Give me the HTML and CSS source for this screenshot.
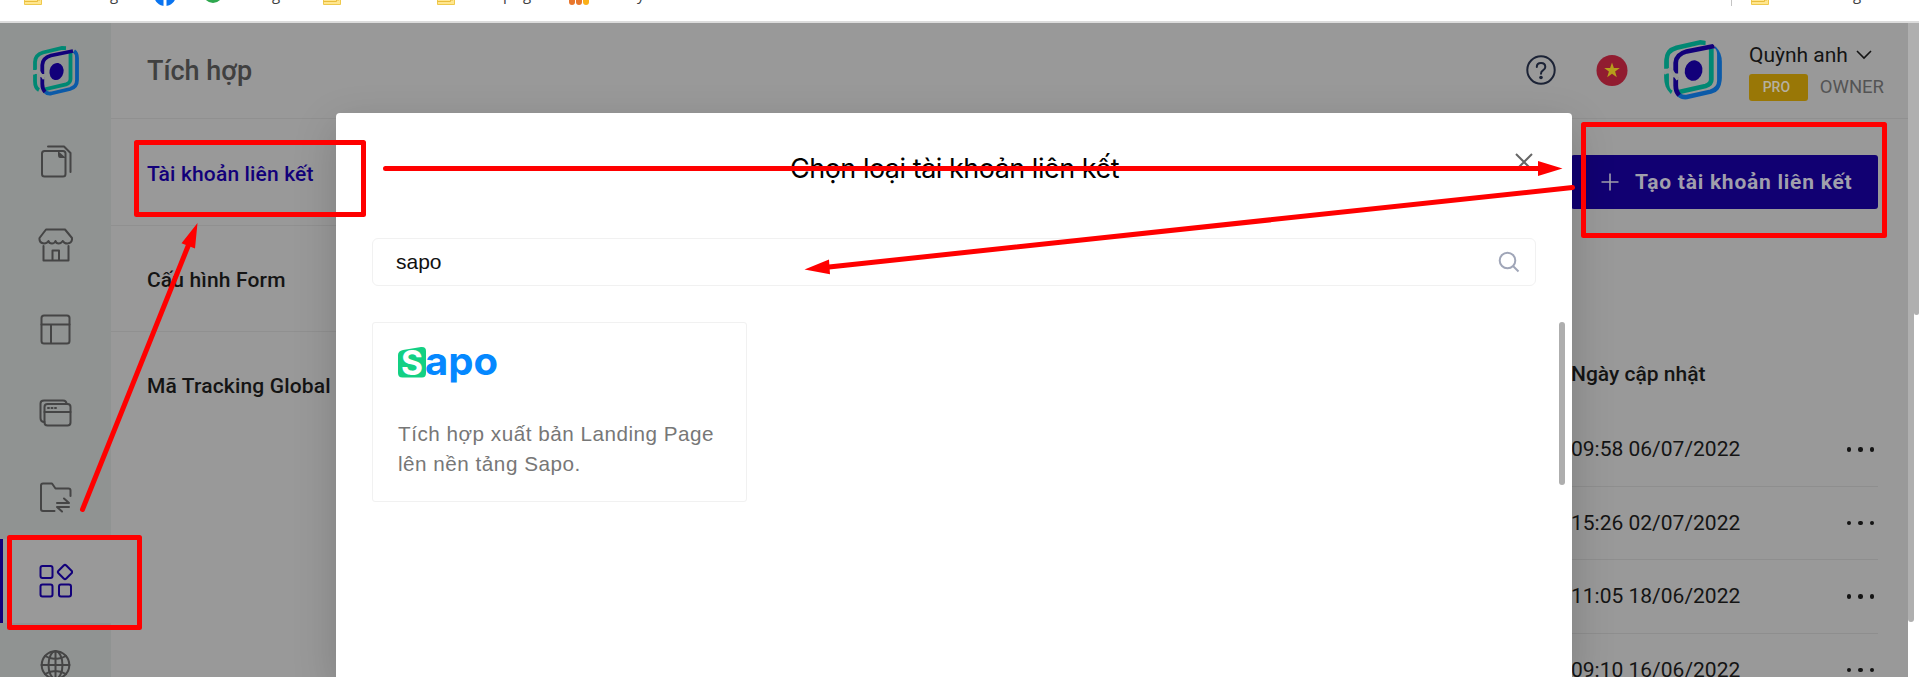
FILE: index.html
```html
<!DOCTYPE html>
<html lang="vi">
<head>
<meta charset="utf-8">
<title>Tích hợp</title>
<link rel="stylesheet" href="styles.css">
</head>
<body>
<svg width="0" height="0" class="defs">
  <defs>
    <symbol id="logo" viewBox="0 0 46 50">
      <g fill="none" stroke-width="3.8">
        <path stroke="#0b5aa8" d="M41 5 Q44 7 44 12 V34 Q44 41 37 43 L18 47.500 Q14 48 12 45.500"/>
        <path stroke="#008873" d="M33 2.200 L29 2 L10 6.500 Q2 9 2 16 V24 M2 28 V35 Q2 42 6 44"/>
        <path stroke="#008873" d="M37.500 7 V33 Q37.500 37 33 38.300 L11 43.500"/>
        <path stroke="#12007a" d="M40 5 L18 9.500 Q9.500 12 9.300 19 V28 M9.300 31 V38 Q9.300 43 12 46"/>
      </g>
      <path d="M0 28 L5 24 L11 33" fill="none" stroke="#949695" stroke-width="2.500"/>
      <ellipse cx="23.500" cy="25.500" rx="7" ry="8.600" fill="#12007a" transform="rotate(12 23.500 25.500)"/>
    </symbol>
    <symbol id="folder" viewBox="0 0 18 16"><path d="M.5 0H17.500V14.500H.5Z" fill="#ffe68f" stroke="#efc94c"/><path d="M13.500 0V11.500H.5M15 0V11" stroke="#e9bd3c" fill="none"/></symbol>
  </defs>
</svg>

<div class="bookmarks">
  <svg width="1919" height="21" viewBox="0 0 1919 21">
    <use href="#folder" x="24" y="-10" width="18" height="16"/>
    <text x="110" y="0">g</text>
    <circle cx="165" cy="-5" r="11" fill="#0a74f0"/><path d="M163.500 0h3v7h-3z" fill="#fff"/>
    <circle cx="213" cy="-7" r="10" fill="#2fa84f"/>
    <text x="272" y="0">g</text>
    <use href="#folder" x="323" y="-10" width="18" height="16"/>
    <use href="#folder" x="437" y="-10" width="18" height="16"/>
    <text x="503" y="0">p</text><text x="523" y="0">g</text>
    <g fill="#e8762c"><rect x="569" y="-8" width="6" height="13" rx="3"/><rect x="576" y="-8" width="6" height="13" rx="3"/><rect x="583" y="-8" width="6" height="13" rx="3" fill="#fbb018"/></g>
    <text x="637" y="0">y</text>
    <path d="M1731.500 0V6" stroke="#c4c4c4"/>
    <use href="#folder" x="1751" y="-10" width="18" height="16"/>
    <text x="1853" y="0">g</text>
  </svg>
</div>

<div class="app">
  <aside class="sidebar">
    <div class="brand"><svg width="46" height="50"><use href="#logo"/></svg></div>
    <div class="nav-item"><svg width="36" height="36" viewBox="0 0 36 36"><rect x="5" y="8" width="23.500" height="25.500" rx="2.500"/><path d="M11 3.500H27L33.500 10V29"/><path class="solid" d="M21 8L29 15H23Q21 15 21 12Z"/></svg></div>
    <div class="nav-item"><svg width="36" height="36" viewBox="0 0 36 36"><path d="M9 2.500H28L35 11Q35.500 16 30.500 16.500Q27 16.500 25.800 14Q24 16.500 21.800 16.500Q19 16.500 18.500 14Q17.500 16.500 15 16.500Q12 16.500 11.500 14Q10 16.500 7 16.500Q2 16 2.500 11Z M6.500 19V33.500H31.500V19M15.500 33.500V23.500H22V33.500"/></svg></div>
    <div class="nav-item"><svg width="36" height="36" viewBox="0 0 36 36"><rect x="4.500" y="4.500" width="28" height="28" rx="2.500"/><path d="M4.500 13.500H32.500M14 13.500V32"/></svg></div>
    <div class="nav-item"><svg width="36" height="36" viewBox="0 0 36 36"><rect x="7.500" y="9" width="26" height="21.500" rx="3"/><path d="M7.500 17H33.500M7.500 27Q3.500 27 3.500 23V8.500Q3.500 5.500 7 5.500H26Q29.500 5.500 29.500 9"/><path d="M11 13h1M14.500 13h1M18 13h1"/></svg></div>
    <div class="nav-item"><svg width="36" height="36" viewBox="0 0 36 36"><path d="M17.500 32H6Q4 32 4 30V6.500Q4 4.500 6 4.500H15L18.500 9.500H31.500Q33.500 9.500 33.500 11.500V17"/><path d="M20 24H32L27 19.500M32 28H20L25 32.500"/></svg></div>
    <div class="nav-item active"><svg width="36" height="36" viewBox="0 0 36 36"><rect x="3.500" y="3" width="12" height="12" rx="2"/><rect x="3.500" y="21.500" width="12" height="12" rx="2"/><rect x="22" y="21.500" width="12" height="12" rx="2"/><rect x="22.500" y="3.500" width="11" height="11" rx="1.800" transform="rotate(45 28 9)"/></svg></div>
    <div class="nav-item"><svg width="36" height="36" viewBox="0 0 36 36"><circle cx="18.500" cy="18" r="13.800"/><ellipse cx="18.500" cy="18" rx="7" ry="13.800"/><path d="M18.500 4V32M4.500 18H32.500M8 9Q18.500 15 29 9M8 27Q18.500 21 29 27"/></svg></div>
  </aside>

  <div class="main">
    <header class="topbar">
      <h1>Tích hợp</h1>
      <svg class="help" width="30" height="30" viewBox="0 0 30 30"><circle cx="15" cy="15" r="13.700"/><path d="M10.800 12Q10.800 8 15 8Q19.300 8 19.300 12Q19.300 14 17 15.300Q15 16.500 15 18.700"/><circle class="dot" cx="15" cy="22.500" r="1.800"/></svg>
      <svg class="flag" width="32" height="32" viewBox="0 0 32 32"><circle cx="16" cy="15.500" r="15.500" fill="#911c30"/><path fill="#b69e1b" d="M16 7.500l1.900 5.500h5.900l-4.700 3.500 1.700 5.700-4.800-3.500-4.800 3.500 1.700-5.700-4.700-3.500h5.900z"/></svg>
      <svg class="avatar" width="58" height="60" viewBox="0 0 46 50" preserveAspectRatio="none"><use href="#logo" width="46" height="50"/></svg>
      <div class="user">
        <div class="user-name"><span>Quỳnh anh</span><svg width="16" height="10" viewBox="0 0 16 10"><path d="M1 1l7 7 7-7"/></svg></div>
        <div class="user-role"><span class="badge">PRO</span><span>OWNER</span></div>
      </div>
    </header>
    <div class="body">
      <nav class="submenu">
        <a class="selected">Tài khoản liên kết</a>
        <a>Cấu hình Form</a>
        <a>Mã Tracking Global</a>
      </nav>
      <section class="content">
        <button class="create"><svg width="18" height="18" viewBox="0 0 18 18"><path d="M9 .5V17.500M.5 9H17.500"/></svg><span>Tạo tài khoản liên kết</span></button>
        <div class="table">
          <div class="thead">Ngày cập nhật</div>
          <div class="row"><span>09:58 06/07/2022</span><i></i><i></i><i></i></div>
          <div class="row"><span>15:26 02/07/2022</span><i></i><i></i><i></i></div>
          <div class="row"><span>11:05 18/06/2022</span><i></i><i></i><i></i></div>
          <div class="row last"><span>09:10 16/06/2022</span><i></i><i></i><i></i></div>
        </div>
      </section>
    </div>
  </div>
  <div class="scrolls"><div class="inner"></div><div class="outer"></div></div>
</div>

<div class="modal">
  <div class="modal-head"><h2>Chọn loại tài khoản liên kết</h2><svg class="close" width="18" height="18" viewBox="0 0 18 18"><path d="M1 1L17 17M17 1L1 17"/></svg></div>
  <div class="search"><span>sapo</span><svg width="22" height="22" viewBox="0 0 22 22"><circle cx="9.500" cy="9.500" r="7.800"/><path d="M15 15L20.500 20.500"/></svg></div>
  <div class="results">
    <div class="card">
      <svg class="sapo" width="102" height="42" viewBox="0 0 102 42"><path d="M5 4L23 1Q28 .5 28 5V27Q28 31.500 24 31.500H4.500Q0 31.500 0 27V9Q0 5 5 4Z" fill="#13d083"/><text class="sapo-s" x="3" y="29" textLength="22" lengthAdjust="spacingAndGlyphs">S</text><text class="sapo-apo" x="27" y="29" textLength="73" lengthAdjust="spacingAndGlyphs">apo</text></svg>
      <p>Tích hợp xuất bản Landing Page lên nền tảng Sapo.</p>
    </div>
    <div class="modal-scroll"></div>
  </div>
</div>

<svg class="marks" width="1919" height="677" viewBox="0 0 1919 677">
  <g fill="none" stroke="#f00" stroke-width="5" stroke-linejoin="round" stroke-linecap="round">
    <rect x="136.500" y="142.500" width="227" height="72"/>
    <rect x="9.500" y="537.500" width="130" height="90"/>
    <rect x="1583.500" y="124.500" width="301" height="111"/>
    <path d="M385.500 168.500H1540M1572.500 187.500L829 267M82.500 509.500L188.500 245"/>
  </g>
  <path fill="#f00" d="M1562.500 168.500L1538 161V176ZM804.500 269.500L829 259.500L830 274.200ZM197.500 223L181.500 243.300L195 248.500Z"/>
</svg>
</body>
</html>
```
FILE: styles.css
```css
* { box-sizing: border-box; }
body { margin: 0; width: 1919px; height: 677px; overflow: hidden; position: relative; background: #fff; font-family: Roboto, "Liberation Sans", sans-serif; color: #141414; }
h1, h2, p { margin: 0; font-weight: 400; }
.defs { position: absolute; }

.bookmarks { height: 23px; border-bottom: 2px solid #dcdcdc; }
.bookmarks svg { display: block; }
.bookmarks text { font: 15px "Open Sans", sans-serif; fill: #3c4043; }

.app { display: flex; height: 654px; overflow: hidden; }
.sidebar { width: 111px; flex: none; background: #909392; }
.brand { height: 96px; padding: 23px 0 0 33px; }
.nav-item { height: 84px; display: flex; align-items: center; padding-left: 37px; }
.nav-item svg { fill: none; stroke: #454545; stroke-width: 2; stroke-linejoin: round; stroke-linecap: round; }
.nav-item .solid { fill: #454545; stroke: none; }
.nav-item.active { background: #999; border-left: 3px solid #12007a; padding-left: 34px; }
.nav-item.active svg { stroke: #12007a; }

.main { flex: 1; background: #999; }
.topbar { height: 96px; border-bottom: 1px solid #909090; display: flex; align-items: center; padding-left: 36px; padding-right: 24px; }
.topbar h1 { font-size: 27px; font-weight: 500; color: #404040; margin-right: auto; }
.help { fill: none; stroke: #1c2336; stroke-width: 2; stroke-linecap: round; margin: 0 40px 2px 0; }
.help .dot { fill: #1c2336; stroke: none; }
.flag { margin-right: 36px; }
.avatar { margin: 0 27px 1px 0; border-radius: 22px; }
.user { width: 135px; padding-bottom: 1px; }
.user-name { display: flex; align-items: center; gap: 8px; font-size: 21px; height: 30px; white-space: nowrap; }
.user-name svg { fill: none; stroke: #141414; stroke-width: 1.6; }
.user-role { display: flex; align-items: center; gap: 12px; font-size: 18.500px; color: #545454; margin-top: 4px; }
.badge { width: 59px; height: 27px; border-radius: 3px; background: #997706; color: #b5b0a0; font-size: 14px; font-weight: 500; line-height: 27px; padding-right: 4px; text-align: center; }

.body { display: flex; justify-content: space-between; }
.submenu { width: 420px; }
.submenu a { display: flex; align-items: center; height: 106px; padding: 2px 0 0 36px; border-bottom: 1px solid #909090; font-size: 21px; font-weight: 500; letter-spacing: .15px; }
.submenu a:last-child { border: 0; }
.submenu .selected { color: #12007a; height: 107px; padding-top: 4px; }
.content { width: 307px; margin-right: 30px; padding-top: 36px; }
.create { display: flex; align-items: center; gap: 16px; width: 307px; height: 54px; padding: 0 25px 0 30px; border: 0; border-radius: 3px; background: #110072; color: #a09fac; font: 700 21px Roboto, sans-serif; letter-spacing: .75px; white-space: nowrap; }
.create svg { stroke: #a09fac; stroke-width: 1.600; flex: none; }
.thead { margin-top: 129px; height: 75px; padding-top: 24px; font-size: 21px; font-weight: 500; }
.row { display: flex; align-items: center; gap: 7px; height: 73.500px; padding-right: 4px; border-bottom: 1px solid #8e8e8e; font-size: 21px; }
.row span { margin-right: auto; }
.row i { width: 4.500px; height: 4.500px; border-radius: 50%; background: #141414; }
.scrolls { width: 11px; flex: none; display: flex; background: #fff; }
.inner { width: 6px; height: 599px; background: #afafaf; border-radius: 0 0 3px 3px; }
.outer { width: 5px; height: 292px; background: #afafaf; border-radius: 0 0 3px 3px; }

.modal { position: absolute; left: 336px; top: 113px; width: 1236px; height: 564px; padding: 0 7px 0 36px; border-radius: 4px 4px 0 0; background: #fff; box-shadow: 0 14px 44px rgba(0, 0, 0, .18); font-family: "Liberation Sans", sans-serif; }
.modal-head { display: flex; height: 125px; padding: 39px 32px 0 0; }
.modal-head h2 { flex: 1; padding-left: 22px; text-align: center; font: 27px/34px Inter, sans-serif; letter-spacing: -.5px; color: #000; }
.close { stroke: #666; stroke-width: 2; margin-top: 1px; }
.search { display: flex; align-items: center; justify-content: space-between; width: 1164px; height: 48px; padding: 0 15px 0 23px; border: 1px solid #f1f1f1; border-radius: 6px; font-size: 21px; color: #111; }
.search svg { fill: none; stroke: #a0a6b8; stroke-width: 2; }
.results { display: flex; justify-content: space-between; margin-top: 36px; }
.card { width: 375px; height: 180px; padding: 23px 25px; border: 1px solid #f1f1f1; border-radius: 3px; }
.sapo { display: block; margin-bottom: 31px; overflow: visible; }
.sapo-s { font: 700 34px Inter, sans-serif; fill: #fff; }
.sapo-apo { font: 700 39px Inter, sans-serif; fill: #0588ff; }
.card p { width: 330px; font-size: 20.700px; line-height: 30px; letter-spacing: .5px; color: #777; }
.modal-scroll { width: 6px; height: 163px; border-radius: 3px; background: #aeaeae; }

.marks { position: absolute; left: 0; top: 0; }
```
